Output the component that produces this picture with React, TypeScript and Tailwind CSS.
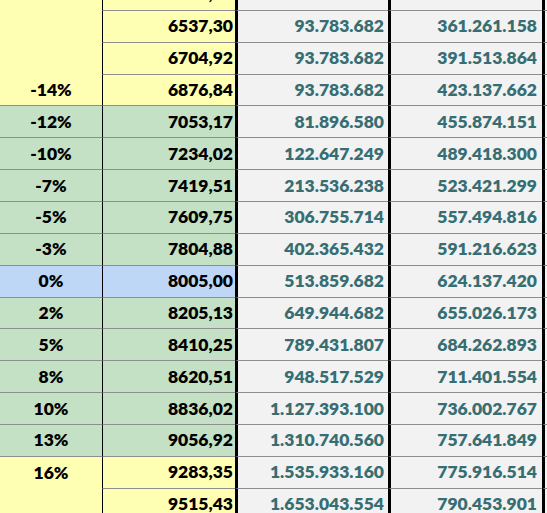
const YELLOW = 'y';
const GREEN = 'g';
const BLUE = 'b';

type Row = { pct: string; price: string; a: string; b: string; tone: string };

const rows: Row[] = [
  { pct: '', price: '6373,87', a: '93.783.682', b: '332.369.969', tone: YELLOW },
  { pct: '', price: '6537,30', a: '93.783.682', b: '361.261.158', tone: YELLOW },
  { pct: '', price: '6704,92', a: '93.783.682', b: '391.513.864', tone: YELLOW },
  { pct: '-14%', price: '6876,84', a: '93.783.682', b: '423.137.662', tone: YELLOW },
  { pct: '-12%', price: '7053,17', a: '81.896.580', b: '455.874.151', tone: GREEN },
  { pct: '-10%', price: '7234,02', a: '122.647.249', b: '489.418.300', tone: GREEN },
  { pct: '-7%', price: '7419,51', a: '213.536.238', b: '523.421.299', tone: GREEN },
  { pct: '-5%', price: '7609,75', a: '306.755.714', b: '557.494.816', tone: GREEN },
  { pct: '-3%', price: '7804,88', a: '402.365.432', b: '591.216.623', tone: GREEN },
  { pct: '0%', price: '8005,00', a: '513.859.682', b: '624.137.420', tone: BLUE },
  { pct: '2%', price: '8205,13', a: '649.944.682', b: '655.026.173', tone: GREEN },
  { pct: '5%', price: '8410,25', a: '789.431.807', b: '684.262.893', tone: GREEN },
  { pct: '8%', price: '8620,51', a: '948.517.529', b: '711.401.554', tone: GREEN },
  { pct: '10%', price: '8836,02', a: '1.127.393.100', b: '736.002.767', tone: GREEN },
  { pct: '13%', price: '9056,92', a: '1.310.740.560', b: '757.641.849', tone: GREEN },
  { pct: '16%', price: '9283,35', a: '1.535.933.160', b: '775.916.514', tone: YELLOW },
  { pct: '', price: '9515,43', a: '1.653.043.554', b: '790.453.901', tone: YELLOW },
];

const toneBg: Record<string, string> = {
  y: 'bg-[#ffffb3]',
  g: 'bg-[#c4e1c5]',
  b: 'bg-[#bed7f7]',
};

export default function App() {
  return (
    <div
      className="w-[547px] h-[513px] overflow-hidden bg-white font-extrabold text-[17.5px] leading-none"
      style={{ fontFamily: 'Lato, "Liberation Sans", sans-serif' }}
    >
      <div className="flex flex-col -mt-[21px]">
        {rows.map((r, i) => {
          const next = rows[i + 1];
          const merged = r.tone === YELLOW && next?.tone === YELLOW;
          return (
            <div key={i} className="flex h-[31.87px]">
              <div
                className={`w-[102px] flex items-end justify-center pb-[7px] text-black ${toneBg[r.tone]} ${
                  merged ? '' : 'border-b border-[#8e8e8e]'
                }`}
              >
                {r.pct}
              </div>
              <div
                className={`w-[133px] flex items-end justify-end pr-[2px] pb-[7px] text-black border-l border-l-black border-b border-b-[#8e8e8e] ${toneBg[r.tone]}`}
              >
                {r.price}
              </div>
              <div className="w-[153px] flex items-end justify-end pr-[4px] pb-[7px] text-[#376e73] bg-[#f2f2f2] border-l-[3px] border-l-black border-b border-b-[#8e8e8e]">
                {r.a}
              </div>
              <div className="w-[154px] flex items-end justify-end pr-[5px] pb-[7px] text-[#376e73] bg-[#f2f2f2] border-l-[3px] border-l-black border-b border-b-[#8e8e8e]">
                {r.b}
              </div>
              <div className="flex-1 bg-[#f2f2f2] border-l-[3px] border-l-black border-b border-b-[#8e8e8e]" />
            </div>
          );
        })}
      </div>
    </div>
  );
}
